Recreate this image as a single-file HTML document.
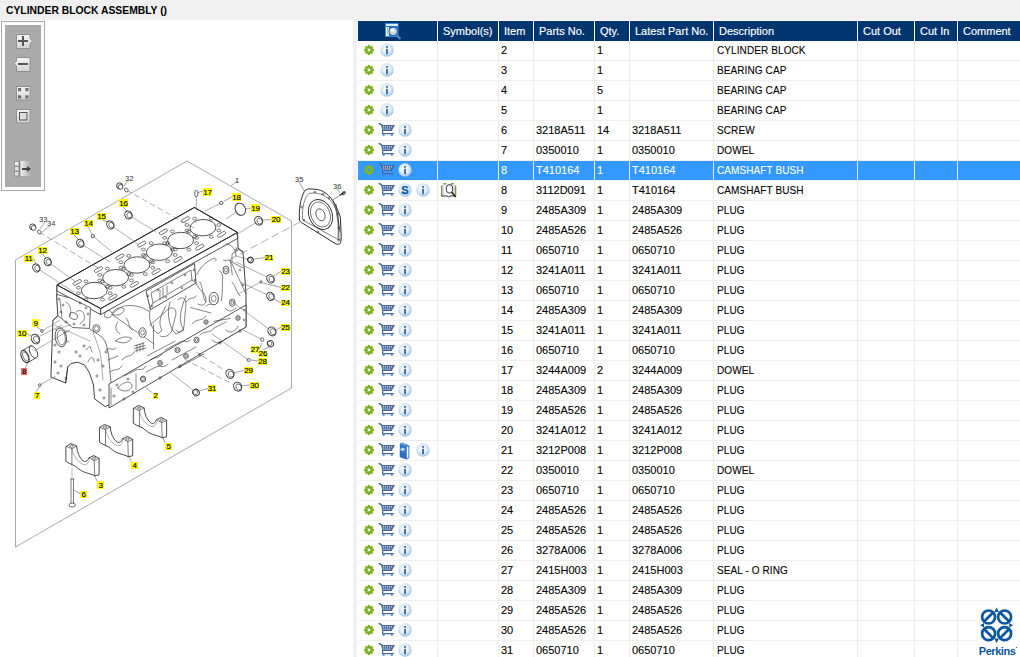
<!DOCTYPE html>
<html><head><meta charset="utf-8"><style>
html,body{margin:0;padding:0;}
body{width:1020px;height:657px;overflow:hidden;position:relative;background:#f0f0f0;font-family:"Liberation Sans",sans-serif;}
#title{position:absolute;left:6px;top:3px;font-weight:bold;font-size:11px;letter-spacing:0px;color:#000;line-height:14px;white-space:nowrap;transform:scaleX(0.94);transform-origin:0 0;}
#left{position:absolute;left:0;top:20px;width:353px;height:637px;background:#fff;}
svg{position:absolute;left:0;top:0;}
.c{position:absolute;font-size:11px;line-height:20px;color:#000;white-space:nowrap;-webkit-text-stroke:0.1px #000;}
.c.s{-webkit-text-stroke:0.1px #fff;}
.n{letter-spacing:0px;}
.d{letter-spacing:0.1px;margin-left:1px;transform:scaleX(0.91);transform-origin:0 0;}
.s{color:#fff;}
.h{position:absolute;top:21px;font-size:11px;line-height:20px;color:#fff;white-space:nowrap;-webkit-text-stroke:0.15px #fff;}
</style></head><body>
<div id="title">CYLINDER BLOCK ASSEMBLY ()</div>
<div id="left"></div>
<svg width="1020" height="657" viewBox="0 0 1020 657">
<defs>
<radialGradient id="ig" cx="0.45" cy="0.42" r="0.58">
<stop offset="0" stop-color="#ffffff"/><stop offset="0.55" stop-color="#e2edf7"/><stop offset="0.85" stop-color="#b5d2ec"/><stop offset="1" stop-color="#9ec3e6"/>
</radialGradient>
<g id="gear"><path fill="#7db425" fill-rule="evenodd" d="M3.43,1.21 L3.86,1.06 L4.04,-0.01 L5.96,-0.01 L6.14,1.06 L6.57,1.21 L6.98,1.41 L7.87,0.78 L9.22,2.13 L8.59,3.02 L8.79,3.43 L8.94,3.86 L10.01,4.04 L10.01,5.96 L8.94,6.14 L8.79,6.57 L8.59,6.98 L9.22,7.87 L7.87,9.22 L6.98,8.59 L6.57,8.79 L6.14,8.94 L5.96,10.01 L4.04,10.01 L3.86,8.94 L3.43,8.79 L3.02,8.59 L2.13,9.22 L0.78,7.87 L1.41,6.98 L1.21,6.57 L1.06,6.14 L-0.01,5.96 L-0.01,4.04 L1.06,3.86 L1.21,3.43 L1.41,3.02 L0.78,2.13 L2.13,0.78 L3.02,1.41Z M5,3.6 A1.4,1.4 0 1,0 5,6.4 A1.4,1.4 0 1,0 5,3.6Z"/></g>
<g id="cart">
<path d="M0.3,0.6 L1.9,1.4 L3.2,2.8" fill="none" stroke="#46689a" stroke-width="1.5" stroke-linecap="round"/>
<path d="M2.3,2 H16 L12.6,8 H3.3 Z" fill="#46689a"/>
<g fill="#e8eef8"><rect x="4" y="3.3" width="1.1" height="1.1"/><rect x="6" y="3.3" width="1.1" height="1.1"/><rect x="8" y="3.3" width="1.1" height="1.1"/><rect x="10" y="3.3" width="1.1" height="1.1"/><rect x="12" y="3.3" width="1.1" height="1.1"/>
<rect x="4.2" y="5.5" width="1.1" height="1.1"/><rect x="6.2" y="5.5" width="1.1" height="1.1"/><rect x="8.2" y="5.5" width="1.1" height="1.1"/><rect x="10.2" y="5.5" width="1.1" height="1.1"/></g>
<path d="M3.6,7.8 V10.6 H14.8" fill="none" stroke="#46689a" stroke-width="1.3"/>
<rect x="3.6" y="11.2" width="2" height="1.6" fill="#3a86e0"/><rect x="11.8" y="11.2" width="2" height="1.6" fill="#3a86e0"/>
</g>
<g id="info">
<circle cx="7" cy="7" r="6.7" fill="url(#ig)"/>
<rect x="6.1" y="3" width="1.8" height="1.8" fill="#3265a5"/>
<rect x="6.1" y="5.8" width="1.8" height="5.4" fill="#3265a5"/>
</g>
<g id="sico">
<circle cx="7" cy="7" r="6.7" fill="url(#ig)"/>
<text x="7" y="10.8" text-anchor="middle" font-family="Liberation Sans" font-weight="bold" font-size="11" fill="#145d9e" stroke="#145d9e" stroke-width="0.4">S</text>
</g>
<g id="book">
<path d="M7,2.2 L10.3,3.8 V16 L7.5,17.6 Z" fill="#2a6db8"/>
<path d="M7.6,4.2 L9.4,5 V15.6 L7.6,16.6 Z" fill="#ffffff"/>
<path d="M0.8,1.4 L3,0.6 L7.6,2.6 V17.6 L0.8,15 Z" fill="#2f7ac8"/>
<path d="M1.5,2.2 L3,1.6 L4.5,2.2 L6,2.8 L7,3.4" stroke="#8fc0ee" stroke-width="0.9" fill="none"/>
<ellipse cx="3.7" cy="7.3" rx="2.2" ry="1.6" fill="#b9d7f3"/>
<path d="M0.8,10 L7.6,12 V17.6 L0.8,15Z" fill="#2268b4" opacity="0.6"/>
</g>
<g id="bookmag">
<path d="M1.2,2.5 C3,1.5 5,1.5 7.5,3 C10,1.5 12,1.5 14,2.5 V13 C12,12 10,12 7.5,13.5 C5,12 3,12 1.2,13 Z" fill="#fbfbfb" stroke="#9a9a9a" stroke-width="0.6"/>
<rect x="0" y="2.5" width="1.3" height="11" fill="#8d8a52"/>
<rect x="14" y="2.5" width="1.3" height="11" fill="#8d8a52"/>
<rect x="2.3" y="0" width="3" height="1.3" fill="#8d8a52"/>
<rect x="9.8" y="0" width="3" height="1.3" fill="#8d8a52"/>
<path d="M1,13.3 C4,12.5 6,13 7.5,14 C9,13 11,12.5 14.3,13.3" fill="none" stroke="#333" stroke-width="0.9"/>
<path d="M2,4 V12 M13,4 V12" stroke="#c8c8c8" stroke-width="1"/>
<ellipse cx="8.5" cy="5.8" rx="3.2" ry="4.2" fill="none" stroke="#333" stroke-width="1"/>
<path d="M10.8,9.3 L14.6,14" stroke="#1e1e1e" stroke-width="1.5"/>
</g>
</defs>

<rect x="357" y="20" width="663" height="637" fill="#fff"/><rect x="358" y="161" width="662" height="19" fill="#3399ff"/><rect x="358" y="60" width="662" height="1" fill="#efefef"/><rect x="358" y="80" width="662" height="1" fill="#efefef"/><rect x="358" y="100" width="662" height="1" fill="#efefef"/><rect x="358" y="120" width="662" height="1" fill="#efefef"/><rect x="358" y="140" width="662" height="1" fill="#efefef"/><rect x="358" y="160" width="662" height="1" fill="#efefef"/><rect x="358" y="180" width="662" height="1" fill="#efefef"/><rect x="358" y="200" width="662" height="1" fill="#efefef"/><rect x="358" y="220" width="662" height="1" fill="#efefef"/><rect x="358" y="240" width="662" height="1" fill="#efefef"/><rect x="358" y="260" width="662" height="1" fill="#efefef"/><rect x="358" y="280" width="662" height="1" fill="#efefef"/><rect x="358" y="300" width="662" height="1" fill="#efefef"/><rect x="358" y="320" width="662" height="1" fill="#efefef"/><rect x="358" y="340" width="662" height="1" fill="#efefef"/><rect x="358" y="360" width="662" height="1" fill="#efefef"/><rect x="358" y="380" width="662" height="1" fill="#efefef"/><rect x="358" y="400" width="662" height="1" fill="#efefef"/><rect x="358" y="420" width="662" height="1" fill="#efefef"/><rect x="358" y="440" width="662" height="1" fill="#efefef"/><rect x="358" y="460" width="662" height="1" fill="#efefef"/><rect x="358" y="480" width="662" height="1" fill="#efefef"/><rect x="358" y="500" width="662" height="1" fill="#efefef"/><rect x="358" y="520" width="662" height="1" fill="#efefef"/><rect x="358" y="540" width="662" height="1" fill="#efefef"/><rect x="358" y="560" width="662" height="1" fill="#efefef"/><rect x="358" y="580" width="662" height="1" fill="#efefef"/><rect x="358" y="600" width="662" height="1" fill="#efefef"/><rect x="358" y="620" width="662" height="1" fill="#efefef"/><rect x="358" y="640" width="662" height="1" fill="#efefef"/><rect x="358" y="660" width="662" height="1" fill="#efefef"/><rect x="437" y="41" width="1" height="616" fill="#ececec"/><rect x="498" y="41" width="1" height="616" fill="#ececec"/><rect x="533" y="41" width="1" height="616" fill="#ececec"/><rect x="594" y="41" width="1" height="616" fill="#ececec"/><rect x="629" y="41" width="1" height="616" fill="#ececec"/><rect x="713" y="41" width="1" height="616" fill="#ececec"/><rect x="857" y="41" width="1" height="616" fill="#ececec"/><rect x="914" y="41" width="1" height="616" fill="#ececec"/><rect x="957" y="41" width="1" height="616" fill="#ececec"/><rect x="358" y="21" width="662" height="20" fill="#00356f"/><rect x="437" y="21" width="1" height="20" fill="#f4f6f9"/><rect x="498" y="21" width="1" height="20" fill="#f4f6f9"/><rect x="533" y="21" width="1" height="20" fill="#f4f6f9"/><rect x="594" y="21" width="1" height="20" fill="#f4f6f9"/><rect x="629" y="21" width="1" height="20" fill="#f4f6f9"/><rect x="713" y="21" width="1" height="20" fill="#f4f6f9"/><rect x="857" y="21" width="1" height="20" fill="#f4f6f9"/><rect x="914" y="21" width="1" height="20" fill="#f4f6f9"/><rect x="957" y="21" width="1" height="20" fill="#f4f6f9"/>
<use href="#gear" x="364" y="45"/><use href="#info" x="380" y="43"/><use href="#gear" x="364" y="65"/><use href="#info" x="380" y="63"/><use href="#gear" x="364" y="85"/><use href="#info" x="380" y="83"/><use href="#gear" x="364" y="105"/><use href="#info" x="380" y="103"/><use href="#gear" x="364" y="125"/><use href="#cart" x="379" y="123"/><use href="#info" x="398" y="123"/><use href="#gear" x="364" y="145"/><use href="#cart" x="379" y="143"/><use href="#info" x="398" y="143"/><use href="#gear" x="364" y="165"/><use href="#cart" x="379" y="163"/><use href="#info" x="398" y="163"/><use href="#gear" x="364" y="185"/><use href="#cart" x="379" y="183"/><use href="#sico" x="398" y="183"/><use href="#info" x="416" y="183"/><use href="#bookmag" x="441" y="183"/><use href="#gear" x="364" y="205"/><use href="#cart" x="379" y="203"/><use href="#info" x="398" y="203"/><use href="#gear" x="364" y="225"/><use href="#cart" x="379" y="223"/><use href="#info" x="398" y="223"/><use href="#gear" x="364" y="245"/><use href="#cart" x="379" y="243"/><use href="#info" x="398" y="243"/><use href="#gear" x="364" y="265"/><use href="#cart" x="379" y="263"/><use href="#info" x="398" y="263"/><use href="#gear" x="364" y="285"/><use href="#cart" x="379" y="283"/><use href="#info" x="398" y="283"/><use href="#gear" x="364" y="305"/><use href="#cart" x="379" y="303"/><use href="#info" x="398" y="303"/><use href="#gear" x="364" y="325"/><use href="#cart" x="379" y="323"/><use href="#info" x="398" y="323"/><use href="#gear" x="364" y="345"/><use href="#cart" x="379" y="343"/><use href="#info" x="398" y="343"/><use href="#gear" x="364" y="365"/><use href="#cart" x="379" y="363"/><use href="#info" x="398" y="363"/><use href="#gear" x="364" y="385"/><use href="#cart" x="379" y="383"/><use href="#info" x="398" y="383"/><use href="#gear" x="364" y="405"/><use href="#cart" x="379" y="403"/><use href="#info" x="398" y="403"/><use href="#gear" x="364" y="425"/><use href="#cart" x="379" y="423"/><use href="#info" x="398" y="423"/><use href="#gear" x="364" y="445"/><use href="#cart" x="379" y="443"/><use href="#book" x="399" y="442"/><use href="#info" x="416" y="443"/><use href="#gear" x="364" y="465"/><use href="#cart" x="379" y="463"/><use href="#info" x="398" y="463"/><use href="#gear" x="364" y="485"/><use href="#cart" x="379" y="483"/><use href="#info" x="398" y="483"/><use href="#gear" x="364" y="505"/><use href="#cart" x="379" y="503"/><use href="#info" x="398" y="503"/><use href="#gear" x="364" y="525"/><use href="#cart" x="379" y="523"/><use href="#info" x="398" y="523"/><use href="#gear" x="364" y="545"/><use href="#cart" x="379" y="543"/><use href="#info" x="398" y="543"/><use href="#gear" x="364" y="565"/><use href="#cart" x="379" y="563"/><use href="#info" x="398" y="563"/><use href="#gear" x="364" y="585"/><use href="#cart" x="379" y="583"/><use href="#info" x="398" y="583"/><use href="#gear" x="364" y="605"/><use href="#cart" x="379" y="603"/><use href="#info" x="398" y="603"/><use href="#gear" x="364" y="625"/><use href="#cart" x="379" y="623"/><use href="#info" x="398" y="623"/><use href="#gear" x="364" y="645"/><use href="#cart" x="379" y="643"/><use href="#info" x="398" y="643"/>
<g id="diagram"><path d="M187.0,161.0 L291.5,221.0 L291.5,388.0 L15.5,547.0 L15.5,260.0Z" fill="none" stroke="#a0a0a0" stroke-width="0.9" stroke-linejoin="round" />
<path d="M57.0,285.0 L194.4,207.5 L237.5,232.5 L238.0,248.0 L243.0,252.0 L246.0,294.0 L246.0,327.0 L105.3,406.7 L94.5,398.8 L93.5,385.0 L89.5,373.0 L84.6,365.0 L77.6,362.2 L71.0,363.5 L67.7,367.0 L65.7,383.0 L50.9,377.0 L52.9,320.6 L57.8,315.6 L56.8,294.9Z" fill="#fff" stroke="#2a2a2a" stroke-width="0.9" stroke-linejoin="round" />
<path d="M57.0,285.0 L194.4,207.5 L237.5,232.5 L100.7,308.6Z" fill="#fff" stroke="#2a2a2a" stroke-width="0.9" stroke-linejoin="round" />
<path d="M57.0,285.0 L100.7,308.6 L100.7,314.6 L57.0,291.0Z" fill="#fff" stroke="#2a2a2a" stroke-width="0.8" stroke-linejoin="round" />
<path d="M100.7,308.6 L237.5,232.5 L237.5,238.5 L100.7,314.6Z" fill="#fff" stroke="#2a2a2a" stroke-width="0.8" stroke-linejoin="round" />
<ellipse cx="94.3" cy="290.5" rx="13.0" ry="8.2" fill="#fff" stroke="#2a2a2a" stroke-width="0.8" transform="rotate(-2 94.3 290.5)"/>
<ellipse cx="115.6" cy="277.7" rx="13.0" ry="8.2" fill="#fff" stroke="#2a2a2a" stroke-width="0.8" transform="rotate(-2 115.6 277.7)"/>
<ellipse cx="136.9" cy="265.0" rx="13.0" ry="8.2" fill="#fff" stroke="#2a2a2a" stroke-width="0.8" transform="rotate(-2 136.9 265.0)"/>
<ellipse cx="159.3" cy="252.2" rx="13.0" ry="8.2" fill="#fff" stroke="#2a2a2a" stroke-width="0.8" transform="rotate(-2 159.3 252.2)"/>
<ellipse cx="180.6" cy="240.5" rx="13.0" ry="8.2" fill="#fff" stroke="#2a2a2a" stroke-width="0.8" transform="rotate(-2 180.6 240.5)"/>
<ellipse cx="202.9" cy="227.7" rx="13.0" ry="8.2" fill="#fff" stroke="#2a2a2a" stroke-width="0.8" transform="rotate(-2 202.9 227.7)"/>
<ellipse cx="110.2" cy="293.2" rx="2.0" ry="1.4" fill="none" stroke="#2a2a2a" stroke-width="0.6"/>
<ellipse cx="102.5" cy="299.6" rx="2.0" ry="1.4" fill="none" stroke="#2a2a2a" stroke-width="0.6"/>
<ellipse cx="86.0" cy="299.6" rx="2.0" ry="1.4" fill="none" stroke="#2a2a2a" stroke-width="0.6"/>
<ellipse cx="78.4" cy="293.2" rx="2.0" ry="1.4" fill="none" stroke="#2a2a2a" stroke-width="0.6"/>
<ellipse cx="78.4" cy="287.8" rx="2.0" ry="1.4" fill="none" stroke="#2a2a2a" stroke-width="0.6"/>
<ellipse cx="86.0" cy="281.4" rx="2.0" ry="1.4" fill="none" stroke="#2a2a2a" stroke-width="0.6"/>
<ellipse cx="102.5" cy="281.4" rx="2.0" ry="1.4" fill="none" stroke="#2a2a2a" stroke-width="0.6"/>
<ellipse cx="110.2" cy="287.8" rx="2.0" ry="1.4" fill="none" stroke="#2a2a2a" stroke-width="0.6"/>
<ellipse cx="131.5" cy="280.4" rx="2.0" ry="1.4" fill="none" stroke="#2a2a2a" stroke-width="0.6"/>
<ellipse cx="123.8" cy="286.8" rx="2.0" ry="1.4" fill="none" stroke="#2a2a2a" stroke-width="0.6"/>
<ellipse cx="107.3" cy="286.8" rx="2.0" ry="1.4" fill="none" stroke="#2a2a2a" stroke-width="0.6"/>
<ellipse cx="99.7" cy="280.4" rx="2.0" ry="1.4" fill="none" stroke="#2a2a2a" stroke-width="0.6"/>
<ellipse cx="99.7" cy="275.0" rx="2.0" ry="1.4" fill="none" stroke="#2a2a2a" stroke-width="0.6"/>
<ellipse cx="107.3" cy="268.6" rx="2.0" ry="1.4" fill="none" stroke="#2a2a2a" stroke-width="0.6"/>
<ellipse cx="123.8" cy="268.6" rx="2.0" ry="1.4" fill="none" stroke="#2a2a2a" stroke-width="0.6"/>
<ellipse cx="131.5" cy="275.0" rx="2.0" ry="1.4" fill="none" stroke="#2a2a2a" stroke-width="0.6"/>
<ellipse cx="152.8" cy="267.7" rx="2.0" ry="1.4" fill="none" stroke="#2a2a2a" stroke-width="0.6"/>
<ellipse cx="145.2" cy="274.1" rx="2.0" ry="1.4" fill="none" stroke="#2a2a2a" stroke-width="0.6"/>
<ellipse cx="128.7" cy="274.1" rx="2.0" ry="1.4" fill="none" stroke="#2a2a2a" stroke-width="0.6"/>
<ellipse cx="121.0" cy="267.7" rx="2.0" ry="1.4" fill="none" stroke="#2a2a2a" stroke-width="0.6"/>
<ellipse cx="121.0" cy="262.3" rx="2.0" ry="1.4" fill="none" stroke="#2a2a2a" stroke-width="0.6"/>
<ellipse cx="128.7" cy="255.9" rx="2.0" ry="1.4" fill="none" stroke="#2a2a2a" stroke-width="0.6"/>
<ellipse cx="145.2" cy="255.9" rx="2.0" ry="1.4" fill="none" stroke="#2a2a2a" stroke-width="0.6"/>
<ellipse cx="152.8" cy="262.3" rx="2.0" ry="1.4" fill="none" stroke="#2a2a2a" stroke-width="0.6"/>
<ellipse cx="175.2" cy="254.9" rx="2.0" ry="1.4" fill="none" stroke="#2a2a2a" stroke-width="0.6"/>
<ellipse cx="167.6" cy="261.3" rx="2.0" ry="1.4" fill="none" stroke="#2a2a2a" stroke-width="0.6"/>
<ellipse cx="151.1" cy="261.3" rx="2.0" ry="1.4" fill="none" stroke="#2a2a2a" stroke-width="0.6"/>
<ellipse cx="143.4" cy="254.9" rx="2.0" ry="1.4" fill="none" stroke="#2a2a2a" stroke-width="0.6"/>
<ellipse cx="143.4" cy="249.5" rx="2.0" ry="1.4" fill="none" stroke="#2a2a2a" stroke-width="0.6"/>
<ellipse cx="151.1" cy="243.1" rx="2.0" ry="1.4" fill="none" stroke="#2a2a2a" stroke-width="0.6"/>
<ellipse cx="167.6" cy="243.1" rx="2.0" ry="1.4" fill="none" stroke="#2a2a2a" stroke-width="0.6"/>
<ellipse cx="175.2" cy="249.5" rx="2.0" ry="1.4" fill="none" stroke="#2a2a2a" stroke-width="0.6"/>
<ellipse cx="196.5" cy="243.2" rx="2.0" ry="1.4" fill="none" stroke="#2a2a2a" stroke-width="0.6"/>
<ellipse cx="188.8" cy="249.6" rx="2.0" ry="1.4" fill="none" stroke="#2a2a2a" stroke-width="0.6"/>
<ellipse cx="172.3" cy="249.6" rx="2.0" ry="1.4" fill="none" stroke="#2a2a2a" stroke-width="0.6"/>
<ellipse cx="164.7" cy="243.2" rx="2.0" ry="1.4" fill="none" stroke="#2a2a2a" stroke-width="0.6"/>
<ellipse cx="164.7" cy="237.8" rx="2.0" ry="1.4" fill="none" stroke="#2a2a2a" stroke-width="0.6"/>
<ellipse cx="172.3" cy="231.4" rx="2.0" ry="1.4" fill="none" stroke="#2a2a2a" stroke-width="0.6"/>
<ellipse cx="188.8" cy="231.4" rx="2.0" ry="1.4" fill="none" stroke="#2a2a2a" stroke-width="0.6"/>
<ellipse cx="196.5" cy="237.8" rx="2.0" ry="1.4" fill="none" stroke="#2a2a2a" stroke-width="0.6"/>
<ellipse cx="218.8" cy="230.4" rx="2.0" ry="1.4" fill="none" stroke="#2a2a2a" stroke-width="0.6"/>
<ellipse cx="211.2" cy="236.8" rx="2.0" ry="1.4" fill="none" stroke="#2a2a2a" stroke-width="0.6"/>
<ellipse cx="194.7" cy="236.8" rx="2.0" ry="1.4" fill="none" stroke="#2a2a2a" stroke-width="0.6"/>
<ellipse cx="187.0" cy="230.4" rx="2.0" ry="1.4" fill="none" stroke="#2a2a2a" stroke-width="0.6"/>
<ellipse cx="187.0" cy="225.0" rx="2.0" ry="1.4" fill="none" stroke="#2a2a2a" stroke-width="0.6"/>
<ellipse cx="194.7" cy="218.6" rx="2.0" ry="1.4" fill="none" stroke="#2a2a2a" stroke-width="0.6"/>
<ellipse cx="211.2" cy="218.6" rx="2.0" ry="1.4" fill="none" stroke="#2a2a2a" stroke-width="0.6"/>
<ellipse cx="218.8" cy="225.0" rx="2.0" ry="1.4" fill="none" stroke="#2a2a2a" stroke-width="0.6"/>
<rect x="72.7" y="280.9" width="9" height="3" rx="1.5" fill="none" stroke="#2a2a2a" stroke-width="0.6" transform="rotate(-29 77.2 282.4)"/>
<rect x="94.0" y="268.1" width="9" height="3" rx="1.5" fill="none" stroke="#2a2a2a" stroke-width="0.6" transform="rotate(-29 98.5 269.6)"/>
<rect x="108.4" y="295.6" width="9" height="3" rx="1.5" fill="none" stroke="#2a2a2a" stroke-width="0.6" transform="rotate(-29 112.9 297.1)"/>
<rect x="115.3" y="255.4" width="9" height="3" rx="1.5" fill="none" stroke="#2a2a2a" stroke-width="0.6" transform="rotate(-29 119.8 256.9)"/>
<rect x="129.8" y="282.9" width="9" height="3" rx="1.5" fill="none" stroke="#2a2a2a" stroke-width="0.6" transform="rotate(-29 134.2 284.4)"/>
<rect x="137.2" y="242.6" width="9" height="3" rx="1.5" fill="none" stroke="#2a2a2a" stroke-width="0.6" transform="rotate(-29 141.7 244.1)"/>
<rect x="151.6" y="270.1" width="9" height="3" rx="1.5" fill="none" stroke="#2a2a2a" stroke-width="0.6" transform="rotate(-29 156.1 271.6)"/>
<rect x="159.0" y="230.3" width="9" height="3" rx="1.5" fill="none" stroke="#2a2a2a" stroke-width="0.6" transform="rotate(-29 163.5 231.8)"/>
<rect x="173.4" y="257.9" width="9" height="3" rx="1.5" fill="none" stroke="#2a2a2a" stroke-width="0.6" transform="rotate(-29 177.9 259.4)"/>
<rect x="180.8" y="218.1" width="9" height="3" rx="1.5" fill="none" stroke="#2a2a2a" stroke-width="0.6" transform="rotate(-29 185.3 219.6)"/>
<rect x="195.2" y="245.6" width="9" height="3" rx="1.5" fill="none" stroke="#2a2a2a" stroke-width="0.6" transform="rotate(-29 199.8 247.1)"/>
<rect x="217.1" y="232.8" width="9" height="3" rx="1.5" fill="none" stroke="#2a2a2a" stroke-width="0.6" transform="rotate(-29 221.6 234.3)"/>
<path d="M57.0,285.0 L194.4,207.5 L237.5,232.5 L100.7,308.6Z" fill="none" stroke="#2a2a2a" stroke-width="0.85" stroke-linejoin="round" />
<path d="M56.8,294.9 L57.8,315.6 L72.7,327.5 L89.5,328.5 L90.5,307.7 L69.7,297.8 Z" fill="#fff" stroke="#2a2a2a" stroke-width="0.7" stroke-linejoin="round" stroke-linecap="round" />
<path d="M60,300 L62,318 M66,302 C70,304 72,310 70,316 M76,312 C80,308 86,312 84,320 L80,324" fill="none" stroke="#2a2a2a" stroke-width="0.55" stroke-linejoin="round" stroke-linecap="round" />
<ellipse cx="73.5" cy="316.0" rx="4.2" ry="3.2" fill="none" stroke="#2a2a2a" stroke-width="0.6" transform="rotate(20 73.5 316.0)"/>
<ellipse cx="59.0" cy="299.0" rx="1.0" ry="1.0" fill="none" stroke="#2a2a2a" stroke-width="0.55"/>
<ellipse cx="63.0" cy="305.0" rx="1.0" ry="1.0" fill="none" stroke="#2a2a2a" stroke-width="0.55"/>
<ellipse cx="61.0" cy="312.0" rx="1.0" ry="1.0" fill="none" stroke="#2a2a2a" stroke-width="0.55"/>
<ellipse cx="66.0" cy="322.0" rx="1.0" ry="1.0" fill="none" stroke="#2a2a2a" stroke-width="0.55"/>
<ellipse cx="74.0" cy="324.0" rx="1.0" ry="1.0" fill="none" stroke="#2a2a2a" stroke-width="0.55"/>
<ellipse cx="84.0" cy="325.0" rx="1.0" ry="1.0" fill="none" stroke="#2a2a2a" stroke-width="0.55"/>
<ellipse cx="88.0" cy="314.0" rx="1.0" ry="1.0" fill="none" stroke="#2a2a2a" stroke-width="0.55"/>
<ellipse cx="86.0" cy="308.0" rx="1.0" ry="1.0" fill="none" stroke="#2a2a2a" stroke-width="0.55"/>
<ellipse cx="80.0" cy="303.0" rx="1.0" ry="1.0" fill="none" stroke="#2a2a2a" stroke-width="0.55"/>
<path d="M52.9,320.6 L57.8,315.6 M65.7,383 L67.7,367" fill="none" stroke="#2a2a2a" stroke-width="0.6" stroke-linejoin="round" stroke-linecap="round" />
<ellipse cx="60.8" cy="337.4" rx="5.6" ry="9.5" fill="none" stroke="#2a2a2a" stroke-width="0.75" transform="rotate(-8 60.8 337.4)"/>
<ellipse cx="61.3" cy="337.4" rx="4.0" ry="7.5" fill="none" stroke="#2a2a2a" stroke-width="0.55" transform="rotate(-8 61.3 337.4)"/>
<path d="M64,333 L68,331 M66,342 L69,341" fill="none" stroke="#2a2a2a" stroke-width="0.55" stroke-linejoin="round" stroke-linecap="round" />
<ellipse cx="55.0" cy="345.0" rx="1.1" ry="1.1" fill="none" stroke="#2a2a2a" stroke-width="0.55"/>
<ellipse cx="59.0" cy="352.0" rx="1.1" ry="1.1" fill="none" stroke="#2a2a2a" stroke-width="0.55"/>
<ellipse cx="55.0" cy="362.0" rx="1.1" ry="1.1" fill="none" stroke="#2a2a2a" stroke-width="0.55"/>
<ellipse cx="61.0" cy="366.0" rx="1.1" ry="1.1" fill="none" stroke="#2a2a2a" stroke-width="0.55"/>
<ellipse cx="66.0" cy="378.0" rx="1.1" ry="1.1" fill="none" stroke="#2a2a2a" stroke-width="0.55"/>
<ellipse cx="58.0" cy="373.0" rx="1.1" ry="1.1" fill="none" stroke="#2a2a2a" stroke-width="0.55"/>
<ellipse cx="76.0" cy="352.0" rx="1.1" ry="1.1" fill="none" stroke="#2a2a2a" stroke-width="0.55"/>
<ellipse cx="84.0" cy="346.0" rx="1.1" ry="1.1" fill="none" stroke="#2a2a2a" stroke-width="0.55"/>
<ellipse cx="80.0" cy="356.0" rx="1.1" ry="1.1" fill="none" stroke="#2a2a2a" stroke-width="0.55"/>
<path d="M54,325 L90,341 M54,330 L70,325" fill="none" stroke="#666" stroke-width="0.5" stroke-linejoin="round" stroke-linecap="round" />
<path d="M90.5,329.5 C96,333 102,336 105.3,341.4 C108,350 109,356 109.3,363.2 C110,372 110.5,378 111.3,385" fill="none" stroke="#2a2a2a" stroke-width="0.65" stroke-linejoin="round" stroke-linecap="round" />
<path d="M93,332 C96,340 98,346 100,352 C102,362 102,372 103,380" fill="none" stroke="#555" stroke-width="0.5" stroke-linejoin="round" stroke-linecap="round" />
<ellipse cx="96.4" cy="328.5" rx="3.6" ry="3.8" fill="#fff" stroke="#2a2a2a" stroke-width="0.7"/>
<ellipse cx="96.4" cy="328.5" rx="2.0" ry="2.2" fill="none" stroke="#2a2a2a" stroke-width="0.5"/>
<ellipse cx="98.0" cy="360.0" rx="1.1" ry="1.1" fill="none" stroke="#2a2a2a" stroke-width="0.55"/>
<ellipse cx="103.0" cy="366.0" rx="1.1" ry="1.1" fill="none" stroke="#2a2a2a" stroke-width="0.55"/>
<ellipse cx="100.0" cy="390.0" rx="1.1" ry="1.1" fill="none" stroke="#2a2a2a" stroke-width="0.55"/>
<ellipse cx="104.0" cy="398.0" rx="1.1" ry="1.1" fill="none" stroke="#2a2a2a" stroke-width="0.55"/>
<ellipse cx="97.0" cy="376.0" rx="1.1" ry="1.1" fill="none" stroke="#2a2a2a" stroke-width="0.55"/>
<ellipse cx="106.0" cy="352.0" rx="1.1" ry="1.1" fill="none" stroke="#2a2a2a" stroke-width="0.55"/>
<path d="M88,362 C90,356 94,356 94,362 M86,350 L90,346 L92,352" fill="none" stroke="#2a2a2a" stroke-width="0.55" stroke-linejoin="round" stroke-linecap="round" />
<path d="M109.0,384.0 L246.0,305.0 L246.0,327.0 L109.0,408.0Z" fill="#fff" stroke="#2a2a2a" stroke-width="0.8" stroke-linejoin="round" />
<path d="M111,388 L111,405 M136,374 L136,390" fill="none" stroke="#2a2a2a" stroke-width="0.55" stroke-linejoin="round" stroke-linecap="round" />
<path d="M118,388 C122,382 130,380 132,385 C133,390 124,394 118,388Z" fill="none" stroke="#2a2a2a" stroke-width="0.6" stroke-linejoin="round" stroke-linecap="round" />
<ellipse cx="114.0" cy="396.0" rx="1.1" ry="1.1" fill="none" stroke="#2a2a2a" stroke-width="0.55"/>
<ellipse cx="117.0" cy="385.0" rx="1.1" ry="1.1" fill="none" stroke="#2a2a2a" stroke-width="0.55"/>
<ellipse cx="128.0" cy="379.0" rx="1.1" ry="1.1" fill="none" stroke="#2a2a2a" stroke-width="0.55"/>
<ellipse cx="133.0" cy="392.0" rx="1.1" ry="1.1" fill="none" stroke="#2a2a2a" stroke-width="0.55"/>
<ellipse cx="124.0" cy="399.0" rx="1.1" ry="1.1" fill="none" stroke="#2a2a2a" stroke-width="0.55"/>
<ellipse cx="143.0" cy="379.0" rx="2.6" ry="3.0" fill="none" stroke="#2a2a2a" stroke-width="0.8"/>
<ellipse cx="143.0" cy="379.0" rx="1.4" ry="1.6" fill="none" stroke="#2a2a2a" stroke-width="0.5"/>
<ellipse cx="160.0" cy="378.0" rx="1.3" ry="1.2" fill="none" stroke="#2a2a2a" stroke-width="0.55"/>
<ellipse cx="180.0" cy="366.2" rx="1.3" ry="1.2" fill="none" stroke="#2a2a2a" stroke-width="0.55"/>
<ellipse cx="200.0" cy="354.5" rx="1.3" ry="1.2" fill="none" stroke="#2a2a2a" stroke-width="0.55"/>
<ellipse cx="220.0" cy="342.8" rx="1.3" ry="1.2" fill="none" stroke="#2a2a2a" stroke-width="0.55"/>
<ellipse cx="240.0" cy="331.0" rx="1.3" ry="1.2" fill="none" stroke="#2a2a2a" stroke-width="0.55"/>
<path d="M146.0,291.0 L194.5,263.5 L196.0,283.0 L150.5,309.7Z" fill="none" stroke="#2a2a2a" stroke-width="0.8" stroke-linejoin="round" />
<path d="M151.0,293.0 L191.0,270.0 L192.0,280.0 L153.0,303.0Z" fill="none" stroke="#2a2a2a" stroke-width="0.6" stroke-linejoin="round" />
<path d="M160,290 L160,300 M163,288 L163,298 M167,286 L167,293 M153,303 L150,308 M192,280 L195,282" fill="none" stroke="#2a2a2a" stroke-width="0.6" stroke-linejoin="round" stroke-linecap="round" />
<ellipse cx="148.0" cy="296.0" rx="0.9" ry="0.9" fill="none" stroke="#2a2a2a" stroke-width="0.55"/>
<ellipse cx="158.0" cy="290.0" rx="0.9" ry="0.9" fill="none" stroke="#2a2a2a" stroke-width="0.55"/>
<ellipse cx="172.0" cy="283.0" rx="0.9" ry="0.9" fill="none" stroke="#2a2a2a" stroke-width="0.55"/>
<ellipse cx="185.0" cy="275.0" rx="0.9" ry="0.9" fill="none" stroke="#2a2a2a" stroke-width="0.55"/>
<ellipse cx="194.0" cy="270.0" rx="0.9" ry="0.9" fill="none" stroke="#2a2a2a" stroke-width="0.55"/>
<ellipse cx="195.0" cy="280.0" rx="0.9" ry="0.9" fill="none" stroke="#2a2a2a" stroke-width="0.55"/>
<ellipse cx="182.0" cy="288.0" rx="0.9" ry="0.9" fill="none" stroke="#2a2a2a" stroke-width="0.55"/>
<ellipse cx="166.0" cy="297.0" rx="0.9" ry="0.9" fill="none" stroke="#2a2a2a" stroke-width="0.55"/>
<ellipse cx="152.0" cy="306.0" rx="0.9" ry="0.9" fill="none" stroke="#2a2a2a" stroke-width="0.55"/>
<path d="M150,310 C148,320 152,330 158,334 L162,330 C158,324 160,316 166,306" fill="none" stroke="#2a2a2a" stroke-width="0.6" stroke-linejoin="round" stroke-linecap="round" />
<path d="M170,302 C166,314 170,330 176,334 L184,330 C178,322 180,310 186,296" fill="none" stroke="#2a2a2a" stroke-width="0.6" stroke-linejoin="round" stroke-linecap="round" />
<path d="M196,283 C198,290 206,292 206,300 C206,306 200,306 198,304" fill="none" stroke="#2a2a2a" stroke-width="0.6" stroke-linejoin="round" stroke-linecap="round" />
<path d="M113.3,313.1 C118,309 122,306 125.5,305.8 C132,305 138,306 143.7,308.3 L148.6,311.3" fill="none" stroke="#333" stroke-width="0.6" stroke-linejoin="round" stroke-linecap="round" />
<path d="M104.7,314 C106,310 110,309 112,313 C113,317 108,319 105,317Z" fill="none" stroke="#333" stroke-width="0.6" stroke-linejoin="round" stroke-linecap="round" />
<path d="M113,312 C116,308 122,306 124,309 C125,312 120,316 114,315Z" fill="none" stroke="#333" stroke-width="0.6" stroke-linejoin="round" stroke-linecap="round" />
<path d="M115.7,341 C120,337 126,336 131.5,338 C130,342 124,345 115.7,341Z" fill="none" stroke="#333" stroke-width="0.6" stroke-linejoin="round" stroke-linecap="round" />
<path d="M134,346 L144,343 M134.5,348.5 L145,345.5 M135,351 L146,348 M137,345 L137,352 M140,344 L140,351 M143,343 L143,350" fill="none" stroke="#333" stroke-width="0.6" stroke-linejoin="round" stroke-linecap="round" />
<path d="M112,314.4 L153.5,343.6 M153.5,325 L153.5,348.5 M147.4,355.8 L175,341.2" fill="none" stroke="#333" stroke-width="0.6" stroke-linejoin="round" stroke-linecap="round" />
<path d="M149.8,325.3 L168,309.5 C172,306 176,308 176,314 L172,330 C170,336 164,338 160,336" fill="none" stroke="#333" stroke-width="0.6" stroke-linejoin="round" stroke-linecap="round" />
<path d="M178,300 C182,296 186,298 186,304 L184,326 C183,332 178,334 176,330" fill="none" stroke="#333" stroke-width="0.6" stroke-linejoin="round" stroke-linecap="round" />
<path d="M118,322 C114,326 116,332 120,334 M126,318 C130,322 128,328 132,330" fill="none" stroke="#333" stroke-width="0.6" stroke-linejoin="round" stroke-linecap="round" />
<path d="M106,350 C110,346 112,352 116,348 M108,360 L118,356 M110,372 C114,368 118,372 122,366" fill="none" stroke="#333" stroke-width="0.6" stroke-linejoin="round" stroke-linecap="round" />
<path d="M122,360 C126,354 132,358 134,352 M124,376 L136,370 C140,368 142,372 146,366" fill="none" stroke="#333" stroke-width="0.6" stroke-linejoin="round" stroke-linecap="round" />
<path d="M150,360 C154,356 158,360 162,354 M146,372 L156,367 C160,365 164,369 168,364" fill="none" stroke="#333" stroke-width="0.6" stroke-linejoin="round" stroke-linecap="round" />
<path d="M165,350 L180,342 C184,340 188,344 190,340 M172,360 L196,347 M178,368 L204,354" fill="none" stroke="#333" stroke-width="0.6" stroke-linejoin="round" stroke-linecap="round" />
<path d="M192,324 C196,318 202,322 206,316 M200,335 C204,330 210,334 214,328 L226,322" fill="none" stroke="#333" stroke-width="0.6" stroke-linejoin="round" stroke-linecap="round" />
<path d="M212,340 C216,344 222,344 226,338 M226,330 C230,334 236,332 238,326" fill="none" stroke="#333" stroke-width="0.6" stroke-linejoin="round" stroke-linecap="round" />
<path d="M196.7,274.7 C200,268 204,263 213.8,258.2 C216,258 216.5,260 215.9,261" fill="none" stroke="#333" stroke-width="0.6" stroke-linejoin="round" stroke-linecap="round" />
<path d="M219.3,270.5 C222,272 223,276 222.7,277.4 C222,284 223,292 221.4,300.7" fill="none" stroke="#333" stroke-width="0.6" stroke-linejoin="round" stroke-linecap="round" />
<path d="M223.4,260.3 L230.3,260.3 L232.3,274.7 M230.3,260.3 L246,294" fill="none" stroke="#333" stroke-width="0.6" stroke-linejoin="round" stroke-linecap="round" />
<path d="M190.5,307.5 L211,313 M213.8,321.2 L230.3,318.5 M186,302 C190,296 194,300 196,296" fill="none" stroke="#333" stroke-width="0.6" stroke-linejoin="round" stroke-linecap="round" />
<path d="M232,282 C236,286 236,292 240,296 M225,308 C228,312 232,312 236,308" fill="none" stroke="#333" stroke-width="0.6" stroke-linejoin="round" stroke-linecap="round" />
<path d="M200,282 C204,290 202,298 206,302 M206,306 C210,302 216,306 218,302" fill="none" stroke="#333" stroke-width="0.6" stroke-linejoin="round" stroke-linecap="round" />
<ellipse cx="213.8" cy="298.6" rx="4.6" ry="6.2" fill="#fff" stroke="#2a2a2a" stroke-width="0.75"/>
<ellipse cx="213.8" cy="298.6" rx="2.3" ry="3.1" fill="none" stroke="#2a2a2a" stroke-width="0.55"/>
<ellipse cx="232.3" cy="302.7" rx="2.8" ry="3.6" fill="#fff" stroke="#2a2a2a" stroke-width="0.75"/>
<ellipse cx="232.3" cy="302.7" rx="1.4" ry="1.8" fill="none" stroke="#2a2a2a" stroke-width="0.55"/>
<ellipse cx="142.5" cy="332.6" rx="3.6" ry="4.8" fill="#fff" stroke="#2a2a2a" stroke-width="0.75"/>
<ellipse cx="142.5" cy="332.6" rx="1.8" ry="2.4" fill="none" stroke="#2a2a2a" stroke-width="0.55"/>
<ellipse cx="196.5" cy="340.0" rx="2.6" ry="2.8" fill="#fff" stroke="#2a2a2a" stroke-width="0.75"/>
<ellipse cx="196.5" cy="340.0" rx="1.3" ry="1.4" fill="none" stroke="#2a2a2a" stroke-width="0.55"/>
<ellipse cx="177.5" cy="350.0" rx="2.6" ry="2.6" fill="#fff" stroke="#2a2a2a" stroke-width="0.75"/>
<ellipse cx="177.5" cy="350.0" rx="1.3" ry="1.3" fill="none" stroke="#2a2a2a" stroke-width="0.55"/>
<ellipse cx="160.0" cy="363.0" rx="2.4" ry="2.4" fill="#fff" stroke="#2a2a2a" stroke-width="0.75"/>
<ellipse cx="160.0" cy="363.0" rx="1.2" ry="1.2" fill="none" stroke="#2a2a2a" stroke-width="0.55"/>
<ellipse cx="226.0" cy="270.0" rx="3.0" ry="4.0" fill="#fff" stroke="#2a2a2a" stroke-width="0.75"/>
<ellipse cx="226.0" cy="270.0" rx="1.5" ry="2.0" fill="none" stroke="#2a2a2a" stroke-width="0.55"/>
<ellipse cx="206.0" cy="322.0" rx="2.2" ry="2.2" fill="#fff" stroke="#2a2a2a" stroke-width="0.75"/>
<ellipse cx="206.0" cy="322.0" rx="1.1" ry="1.1" fill="none" stroke="#2a2a2a" stroke-width="0.55"/>
<ellipse cx="238.0" cy="318.0" rx="2.2" ry="2.4" fill="#fff" stroke="#2a2a2a" stroke-width="0.75"/>
<ellipse cx="238.0" cy="318.0" rx="1.1" ry="1.2" fill="none" stroke="#2a2a2a" stroke-width="0.55"/>
<ellipse cx="186.0" cy="356.0" rx="2.4" ry="2.4" fill="#fff" stroke="#2a2a2a" stroke-width="0.75"/>
<ellipse cx="186.0" cy="356.0" rx="1.2" ry="1.2" fill="none" stroke="#2a2a2a" stroke-width="0.55"/>
<path d="M238,250 L232,254 L232,262 L243,268 M243,252 L236,248" fill="none" stroke="#2a2a2a" stroke-width="0.6" stroke-linejoin="round" stroke-linecap="round" />
<path d="M226,244 C232,244 236,250 236,256" fill="none" stroke="#2a2a2a" stroke-width="0.6" stroke-linejoin="round" stroke-linecap="round" />
<ellipse cx="236.0" cy="250.0" rx="0.9" ry="0.9" fill="none" stroke="#2a2a2a" stroke-width="0.5"/>
<ellipse cx="240.0" cy="270.0" rx="0.9" ry="0.9" fill="none" stroke="#2a2a2a" stroke-width="0.5"/>
<ellipse cx="243.0" cy="285.0" rx="0.9" ry="0.9" fill="none" stroke="#2a2a2a" stroke-width="0.5"/>
<ellipse cx="244.0" cy="310.0" rx="0.9" ry="0.9" fill="none" stroke="#2a2a2a" stroke-width="0.5"/>
<ellipse cx="244.0" cy="320.0" rx="0.9" ry="0.9" fill="none" stroke="#2a2a2a" stroke-width="0.5"/>
<path d="M66.2,446.4 L70.9,443.5 L76.6,446.0 C77.2,452.5 79.2,457.5 83.2,461.0 C85.2,462.0 87.2,462.0 89.0,457.8 L93.8,455.5 L99.1,458.5 L99.1,474.9 L94.7,475.8 C88.2,472.5 84.2,473.5 78.2,468.5 C74.2,464.5 70.2,464.5 66.2,461.6 Z" fill="#fff" stroke="#2a2a2a" stroke-width="0.85" stroke-linejoin="round" stroke-linecap="round" />
<path d="M66.2,446.4 L71.9,448.8 L76.6,446.0 M71.9,448.8 L71.9,465.0 M89.0,457.8 L94.2,460.8 L99.1,458.5 M94.2,460.8 L94.7,475.8" fill="none" stroke="#2a2a2a" stroke-width="0.6" stroke-linejoin="round" stroke-linecap="round" />
<path d="M71.9,448.8 C73.2,455.5 77.2,461.5 82.2,464.0 C85.2,465.5 88.2,464.5 89.0,460.5" fill="none" stroke="#666" stroke-width="0.5" stroke-linejoin="round" stroke-linecap="round" />
<ellipse cx="71.4" cy="446.2" rx="1.7" ry="1.1" fill="none" stroke="#2a2a2a" stroke-width="0.6"/>
<ellipse cx="94.0" cy="458.2" rx="1.7" ry="1.1" fill="none" stroke="#2a2a2a" stroke-width="0.6"/>
<path d="M99.8,427.3 L104.5,424.4 L110.2,426.9 C110.8,433.4 112.8,438.4 116.8,441.9 C118.8,442.9 120.8,442.9 122.6,438.7 L127.4,436.4 L132.7,439.4 L132.7,455.8 L128.3,456.7 C121.8,453.4 117.8,454.4 111.8,449.4 C107.8,445.4 103.8,445.4 99.8,442.5 Z" fill="#fff" stroke="#2a2a2a" stroke-width="0.85" stroke-linejoin="round" stroke-linecap="round" />
<path d="M99.8,427.3 L105.5,429.7 L110.2,426.9 M105.5,429.7 L105.5,445.9 M122.6,438.7 L127.8,441.7 L132.7,439.4 M127.8,441.7 L128.3,456.7" fill="none" stroke="#2a2a2a" stroke-width="0.6" stroke-linejoin="round" stroke-linecap="round" />
<path d="M105.5,429.7 C106.8,436.4 110.8,442.4 115.8,444.9 C118.8,446.4 121.8,445.4 122.6,441.4" fill="none" stroke="#666" stroke-width="0.5" stroke-linejoin="round" stroke-linecap="round" />
<ellipse cx="105.0" cy="427.1" rx="1.7" ry="1.1" fill="none" stroke="#2a2a2a" stroke-width="0.6"/>
<ellipse cx="127.6" cy="439.1" rx="1.7" ry="1.1" fill="none" stroke="#2a2a2a" stroke-width="0.6"/>
<path d="M133.7,408.3 L138.4,405.4 L144.1,407.9 C144.7,414.4 146.7,419.4 150.7,422.9 C152.7,423.9 154.7,423.9 156.5,419.7 L161.3,417.4 L166.6,420.4 L166.6,436.8 L162.2,437.7 C155.7,434.4 151.7,435.4 145.7,430.4 C141.7,426.4 137.7,426.4 133.7,423.5 Z" fill="#fff" stroke="#2a2a2a" stroke-width="0.85" stroke-linejoin="round" stroke-linecap="round" />
<path d="M133.7,408.3 L139.4,410.7 L144.1,407.9 M139.4,410.7 L139.4,426.9 M156.5,419.7 L161.7,422.7 L166.6,420.4 M161.7,422.7 L162.2,437.7" fill="none" stroke="#2a2a2a" stroke-width="0.6" stroke-linejoin="round" stroke-linecap="round" />
<path d="M139.4,410.7 C140.7,417.4 144.7,423.4 149.7,425.9 C152.7,427.4 155.7,426.4 156.5,422.4" fill="none" stroke="#666" stroke-width="0.5" stroke-linejoin="round" stroke-linecap="round" />
<ellipse cx="138.9" cy="408.1" rx="1.7" ry="1.1" fill="none" stroke="#2a2a2a" stroke-width="0.6"/>
<ellipse cx="161.5" cy="420.1" rx="1.7" ry="1.1" fill="none" stroke="#2a2a2a" stroke-width="0.6"/>
<path d="M71,479 L71,503 M73.5,479 L73.5,503 M71,479 L73.5,479" fill="none" stroke="#2a2a2a" stroke-width="0.6" stroke-linejoin="round" stroke-linecap="round" />
<ellipse cx="72.2" cy="505.0" rx="3.2" ry="2.0" fill="#fff" stroke="#2a2a2a" stroke-width="0.7"/>
<line x1="72.0" y1="468.0" x2="72.0" y2="479.0" stroke="#777" stroke-width="0.5"/>
<line x1="36.4" y1="267.9" x2="74.0" y2="292.0" stroke="#6a6a6a" stroke-width="0.55"/>
<line x1="47.7" y1="261.7" x2="76.0" y2="282.0" stroke="#6a6a6a" stroke-width="0.55"/>
<line x1="80.3" y1="243.3" x2="110.0" y2="262.0" stroke="#6a6a6a" stroke-width="0.55"/>
<line x1="92.8" y1="236.1" x2="112.0" y2="252.0" stroke="#6a6a6a" stroke-width="0.55"/>
<line x1="110.4" y1="224.9" x2="138.0" y2="244.0" stroke="#6a6a6a" stroke-width="0.55"/>
<line x1="128.5" y1="214.9" x2="156.0" y2="232.0" stroke="#6a6a6a" stroke-width="0.55"/>
<line x1="39.3" y1="232.0" x2="98.0" y2="268.0" stroke="#6a6a6a" stroke-width="0.55" stroke-dasharray="6,3"/>
<line x1="126.3" y1="190.0" x2="194.0" y2="228.0" stroke="#6a6a6a" stroke-width="0.55" stroke-dasharray="6,3"/>
<line x1="196.3" y1="195.0" x2="196.3" y2="210.0" stroke="#6a6a6a" stroke-width="0.55"/>
<line x1="221.3" y1="203.0" x2="205.0" y2="211.0" stroke="#6a6a6a" stroke-width="0.55"/>
<line x1="240.3" y1="209.2" x2="226.0" y2="219.0" stroke="#6a6a6a" stroke-width="0.55"/>
<line x1="258.7" y1="220.8" x2="236.0" y2="235.0" stroke="#6a6a6a" stroke-width="0.55"/>
<line x1="300.0" y1="222.0" x2="225.0" y2="262.0" stroke="#6a6a6a" stroke-width="0.55" stroke-dasharray="8,4"/>
<line x1="250.5" y1="260.0" x2="236.0" y2="256.0" stroke="#6a6a6a" stroke-width="0.55"/>
<line x1="270.5" y1="278.8" x2="236.0" y2="262.0" stroke="#6a6a6a" stroke-width="0.55"/>
<line x1="261.0" y1="282.0" x2="238.0" y2="294.0" stroke="#6a6a6a" stroke-width="0.55"/>
<line x1="270.5" y1="296.3" x2="240.0" y2="282.0" stroke="#6a6a6a" stroke-width="0.55"/>
<line x1="272.0" y1="331.4" x2="230.0" y2="300.0" stroke="#6a6a6a" stroke-width="0.55"/>
<line x1="262.3" y1="339.6" x2="243.0" y2="330.0" stroke="#6a6a6a" stroke-width="0.55"/>
<line x1="248.6" y1="360.0" x2="212.0" y2="334.0" stroke="#6a6a6a" stroke-width="0.55"/>
<line x1="230.0" y1="373.8" x2="196.0" y2="352.0" stroke="#6a6a6a" stroke-width="0.55" stroke-dasharray="6,3"/>
<line x1="237.7" y1="386.7" x2="182.0" y2="358.0" stroke="#6a6a6a" stroke-width="0.55" stroke-dasharray="6,3"/>
<line x1="196.0" y1="392.5" x2="170.0" y2="372.0" stroke="#6a6a6a" stroke-width="0.55"/>
<line x1="34.0" y1="351.0" x2="70.0" y2="330.0" stroke="#6a6a6a" stroke-width="0.55"/>
<line x1="40.0" y1="336.0" x2="62.0" y2="325.0" stroke="#6a6a6a" stroke-width="0.55"/>
<line x1="42.0" y1="331.0" x2="60.0" y2="320.0" stroke="#6a6a6a" stroke-width="0.55"/>
<line x1="40.0" y1="385.0" x2="56.0" y2="376.0" stroke="#6a6a6a" stroke-width="0.55"/>
<line x1="33.4" y1="258.0" x2="36.0" y2="264.0" stroke="#555" stroke-width="0.55"/>
<line x1="42.0" y1="253.7" x2="46.0" y2="258.0" stroke="#555" stroke-width="0.55"/>
<line x1="74.0" y1="235.0" x2="79.0" y2="240.0" stroke="#555" stroke-width="0.55"/>
<line x1="88.0" y1="227.0" x2="92.0" y2="234.0" stroke="#555" stroke-width="0.55"/>
<line x1="101.0" y1="219.4" x2="108.0" y2="222.0" stroke="#555" stroke-width="0.55"/>
<line x1="123.0" y1="206.8" x2="127.0" y2="211.0" stroke="#555" stroke-width="0.55"/>
<line x1="203.0" y1="191.0" x2="197.0" y2="193.0" stroke="#555" stroke-width="0.55"/>
<line x1="232.0" y1="197.0" x2="224.0" y2="201.0" stroke="#555" stroke-width="0.55"/>
<line x1="250.8" y1="208.0" x2="245.0" y2="209.0" stroke="#555" stroke-width="0.55"/>
<line x1="270.8" y1="219.5" x2="263.0" y2="220.0" stroke="#555" stroke-width="0.55"/>
<line x1="265.0" y1="257.5" x2="254.0" y2="259.0" stroke="#555" stroke-width="0.55"/>
<line x1="281.5" y1="271.0" x2="274.0" y2="276.0" stroke="#555" stroke-width="0.55"/>
<line x1="281.5" y1="287.5" x2="263.0" y2="283.0" stroke="#555" stroke-width="0.55"/>
<line x1="281.5" y1="303.0" x2="274.0" y2="299.0" stroke="#555" stroke-width="0.55"/>
<line x1="281.5" y1="327.0" x2="276.0" y2="330.0" stroke="#555" stroke-width="0.55"/>
<line x1="258.0" y1="352.0" x2="262.0" y2="343.0" stroke="#555" stroke-width="0.55"/>
<line x1="263.0" y1="350.0" x2="269.0" y2="347.0" stroke="#555" stroke-width="0.55"/>
<line x1="258.2" y1="361.0" x2="251.0" y2="360.0" stroke="#555" stroke-width="0.55"/>
<line x1="244.5" y1="370.0" x2="234.0" y2="373.0" stroke="#555" stroke-width="0.55"/>
<line x1="250.0" y1="385.0" x2="241.0" y2="386.0" stroke="#555" stroke-width="0.55"/>
<line x1="208.0" y1="388.6" x2="199.0" y2="391.0" stroke="#555" stroke-width="0.55"/>
<line x1="152.7" y1="393.0" x2="146.0" y2="388.0" stroke="#555" stroke-width="0.55"/>
<line x1="97.2" y1="481.5" x2="95.0" y2="476.0" stroke="#555" stroke-width="0.55"/>
<line x1="131.4" y1="461.6" x2="129.0" y2="457.0" stroke="#555" stroke-width="0.55"/>
<line x1="165.0" y1="442.6" x2="163.0" y2="438.0" stroke="#555" stroke-width="0.55"/>
<line x1="80.4" y1="494.0" x2="74.0" y2="490.0" stroke="#555" stroke-width="0.55"/>
<line x1="36.0" y1="391.8" x2="40.0" y2="386.0" stroke="#555" stroke-width="0.55"/>
<line x1="25.0" y1="368.4" x2="27.0" y2="364.0" stroke="#555" stroke-width="0.55"/>
<line x1="27.0" y1="333.5" x2="31.0" y2="336.0" stroke="#555" stroke-width="0.55"/>
<line x1="37.0" y1="326.9" x2="41.0" y2="330.0" stroke="#555" stroke-width="0.55"/>
<line x1="128.0" y1="180.0" x2="124.0" y2="186.0" stroke="#555" stroke-width="0.55"/>
<line x1="45.0" y1="222.0" x2="40.0" y2="229.0" stroke="#555" stroke-width="0.55"/>
<line x1="50.0" y1="226.0" x2="42.0" y2="232.0" stroke="#555" stroke-width="0.55"/>
<line x1="237.0" y1="181.0" x2="231.0" y2="186.0" stroke="#555" stroke-width="0.55"/>
<line x1="299.0" y1="182.0" x2="305.0" y2="192.0" stroke="#555" stroke-width="0.55"/>
<line x1="337.0" y1="189.0" x2="340.0" y2="193.0" stroke="#555" stroke-width="0.55"/>
<ellipse cx="36.4" cy="267.9" rx="3.5" ry="4.2" fill="#fff" stroke="#2a2a2a" stroke-width="0.9" transform="rotate(-30 36.4 267.9)"/>
<ellipse cx="37.3" cy="268.2" rx="2.3" ry="2.9" fill="none" stroke="#2a2a2a" stroke-width="0.6" transform="rotate(-30 37.3 268.2)"/>
<ellipse cx="47.7" cy="261.7" rx="3.5" ry="4.2" fill="#fff" stroke="#2a2a2a" stroke-width="0.9" transform="rotate(-30 47.7 261.7)"/>
<ellipse cx="48.6" cy="262.0" rx="2.3" ry="2.9" fill="none" stroke="#2a2a2a" stroke-width="0.6" transform="rotate(-30 48.6 262.0)"/>
<ellipse cx="80.3" cy="243.3" rx="3.5" ry="4.2" fill="#fff" stroke="#2a2a2a" stroke-width="0.9" transform="rotate(-30 80.3 243.3)"/>
<ellipse cx="81.2" cy="243.6" rx="2.3" ry="2.9" fill="none" stroke="#2a2a2a" stroke-width="0.6" transform="rotate(-30 81.2 243.6)"/>
<ellipse cx="110.4" cy="224.9" rx="3.5" ry="4.2" fill="#fff" stroke="#2a2a2a" stroke-width="0.9" transform="rotate(-30 110.4 224.9)"/>
<ellipse cx="111.3" cy="225.2" rx="2.3" ry="2.9" fill="none" stroke="#2a2a2a" stroke-width="0.6" transform="rotate(-30 111.3 225.2)"/>
<ellipse cx="128.5" cy="214.9" rx="3.5" ry="4.2" fill="#fff" stroke="#2a2a2a" stroke-width="0.9" transform="rotate(-30 128.5 214.9)"/>
<ellipse cx="129.4" cy="215.2" rx="2.3" ry="2.9" fill="none" stroke="#2a2a2a" stroke-width="0.6" transform="rotate(-30 129.4 215.2)"/>
<ellipse cx="92.8" cy="236.1" rx="1.6" ry="1.6" fill="#fff" stroke="#2a2a2a" stroke-width="0.8"/>
<ellipse cx="119.6" cy="185.9" rx="3.0" ry="3.0" fill="#fff" stroke="#2a2a2a" stroke-width="0.9"/>
<ellipse cx="120.6" cy="186.9" rx="2.4" ry="2.4" fill="#fff" stroke="#2a2a2a" stroke-width="0.8"/>
<ellipse cx="126.3" cy="190.0" rx="1.6" ry="2.2" fill="#fff" stroke="#2a2a2a" stroke-width="0.7" transform="rotate(-30 126.3 190.0)"/>
<ellipse cx="32.6" cy="226.9" rx="3.0" ry="3.0" fill="#fff" stroke="#2a2a2a" stroke-width="0.9"/>
<ellipse cx="33.6" cy="227.9" rx="2.4" ry="2.4" fill="#fff" stroke="#2a2a2a" stroke-width="0.8"/>
<ellipse cx="39.3" cy="232.0" rx="1.6" ry="2.2" fill="#fff" stroke="#2a2a2a" stroke-width="0.7" transform="rotate(-30 39.3 232.0)"/>
<rect x="194.8" y="190.5" width="3" height="6" rx="1.4" fill="#fff" stroke="#333" stroke-width="0.7"/>
<ellipse cx="221.3" cy="203.0" rx="1.8" ry="1.5" fill="#fff" stroke="#2a2a2a" stroke-width="0.8"/>
<ellipse cx="240.3" cy="209.2" rx="5.0" ry="6.3" fill="#fff" stroke="#2a2a2a" stroke-width="0.9" transform="rotate(-25 240.3 209.2)"/>
<ellipse cx="258.7" cy="220.8" rx="3.8" ry="4.5" fill="#fff" stroke="#2a2a2a" stroke-width="0.9" transform="rotate(-30 258.7 220.8)"/>
<ellipse cx="259.6" cy="221.1" rx="2.5" ry="3.1" fill="none" stroke="#2a2a2a" stroke-width="0.6" transform="rotate(-30 259.6 221.1)"/>
<ellipse cx="250.5" cy="260.0" rx="2.8" ry="2.9" fill="#fff" stroke="#2a2a2a" stroke-width="0.9" transform="rotate(-30 250.5 260.0)"/>
<ellipse cx="249.7" cy="259.6" rx="2.0" ry="2.1" fill="none" stroke="#2a2a2a" stroke-width="0.6" transform="rotate(-30 249.7 259.6)"/>
<ellipse cx="270.5" cy="278.8" rx="3.6" ry="4.3" fill="#fff" stroke="#2a2a2a" stroke-width="0.9" transform="rotate(-30 270.5 278.8)"/>
<ellipse cx="271.4" cy="279.1" rx="2.3" ry="3.0" fill="none" stroke="#2a2a2a" stroke-width="0.6" transform="rotate(-30 271.4 279.1)"/>
<ellipse cx="261.0" cy="282.0" rx="1.2" ry="1.2" fill="#fff" stroke="#2a2a2a" stroke-width="0.7"/>
<ellipse cx="270.5" cy="296.3" rx="3.6" ry="4.3" fill="#fff" stroke="#2a2a2a" stroke-width="0.9" transform="rotate(-30 270.5 296.3)"/>
<ellipse cx="271.4" cy="296.6" rx="2.3" ry="3.0" fill="none" stroke="#2a2a2a" stroke-width="0.6" transform="rotate(-30 271.4 296.6)"/>
<ellipse cx="272.0" cy="331.4" rx="3.9" ry="4.6" fill="#fff" stroke="#2a2a2a" stroke-width="0.9" transform="rotate(-30 272.0 331.4)"/>
<ellipse cx="272.9" cy="331.7" rx="2.5" ry="3.2" fill="none" stroke="#2a2a2a" stroke-width="0.6" transform="rotate(-30 272.9 331.7)"/>
<ellipse cx="262.3" cy="339.6" rx="1.6" ry="1.8" fill="#fff" stroke="#2a2a2a" stroke-width="0.7"/>
<ellipse cx="270.5" cy="343.7" rx="3.0" ry="3.2" fill="#fff" stroke="#2a2a2a" stroke-width="0.9" transform="rotate(-30 270.5 343.7)"/>
<ellipse cx="269.7" cy="343.3" rx="2.1" ry="2.2" fill="none" stroke="#2a2a2a" stroke-width="0.6" transform="rotate(-30 269.7 343.3)"/>
<ellipse cx="248.6" cy="360.0" rx="1.5" ry="1.5" fill="#fff" stroke="#2a2a2a" stroke-width="0.7"/>
<ellipse cx="230.0" cy="373.8" rx="3.9" ry="4.6" fill="#fff" stroke="#2a2a2a" stroke-width="0.9" transform="rotate(-30 230.0 373.8)"/>
<ellipse cx="230.9" cy="374.1" rx="2.5" ry="3.2" fill="none" stroke="#2a2a2a" stroke-width="0.6" transform="rotate(-30 230.9 374.1)"/>
<ellipse cx="237.7" cy="386.7" rx="3.9" ry="4.6" fill="#fff" stroke="#2a2a2a" stroke-width="0.9" transform="rotate(-30 237.7 386.7)"/>
<ellipse cx="238.6" cy="387.0" rx="2.5" ry="3.2" fill="none" stroke="#2a2a2a" stroke-width="0.6" transform="rotate(-30 238.6 387.0)"/>
<ellipse cx="196.0" cy="392.5" rx="3.2" ry="3.4" fill="#fff" stroke="#2a2a2a" stroke-width="0.9" transform="rotate(-30 196.0 392.5)"/>
<ellipse cx="195.2" cy="392.1" rx="2.2" ry="2.4" fill="none" stroke="#2a2a2a" stroke-width="0.6" transform="rotate(-30 195.2 392.1)"/>
<path d="M23.5,350 L31,345.5 M27,363 L35,358.5" fill="none" stroke="#2a2a2a" stroke-width="0.8" stroke-linejoin="round" stroke-linecap="round" />
<ellipse cx="25.0" cy="356.5" rx="3.5" ry="6.6" fill="#fff" stroke="#2a2a2a" stroke-width="0.9" transform="rotate(-25 25.0 356.5)"/>
<ellipse cx="33.5" cy="352.0" rx="3.5" ry="6.6" fill="none" stroke="#2a2a2a" stroke-width="0.8" transform="rotate(-25 33.5 352.0)"/>
<ellipse cx="25.5" cy="356.5" rx="2.3" ry="5.0" fill="none" stroke="#2a2a2a" stroke-width="0.6" transform="rotate(-25 25.5 356.5)"/>
<ellipse cx="35.5" cy="339.0" rx="4.0" ry="5.0" fill="#fff" stroke="#2a2a2a" stroke-width="0.9" transform="rotate(-30 35.5 339.0)"/>
<ellipse cx="36.4" cy="339.3" rx="2.6" ry="3.5" fill="none" stroke="#2a2a2a" stroke-width="0.6" transform="rotate(-30 36.4 339.3)"/>
<ellipse cx="42.0" cy="331.0" rx="1.4" ry="1.4" fill="#fff" stroke="#2a2a2a" stroke-width="0.7"/>
<ellipse cx="39.8" cy="385.0" rx="1.3" ry="1.3" fill="#fff" stroke="#2a2a2a" stroke-width="0.7"/>
<path d="M299.4,219.1 C299,210 300,200 304.2,191.7 C306,189 309,188.5 311,189 C314,189 318,189.5 320.6,190.3 C325,192 328,195 330.2,197.2 C334,202 336,206 337,208.8 C339,213 340.5,216 340.5,219.8 L341.2,236.2 C341.2,240 340.8,243 339.8,243.8 C338.5,244.5 337,244.5 335.7,243.8 L301.4,222.5 C300,221.5 299.5,220.5 299.4,219.1Z" fill="#fff" stroke="#2a2a2a" stroke-width="1.0" stroke-linejoin="round" stroke-linecap="round" />
<path d="M302.5,218 C302,208 304,198 309,193.5 C316,192 324,194 330,200 C336,207 338.5,214 338.5,222 L339,240 L303.5,220.5Z" fill="none" stroke="#2a2a2a" stroke-width="0.6" stroke-linejoin="round" stroke-linecap="round" />
<ellipse cx="320.5" cy="214.5" rx="11.5" ry="15.5" fill="none" stroke="#2a2a2a" stroke-width="0.9" transform="rotate(-22 320.5 214.5)"/>
<ellipse cx="320.5" cy="214.5" rx="9.5" ry="13.0" fill="none" stroke="#2a2a2a" stroke-width="0.6" transform="rotate(-22 320.5 214.5)"/>
<ellipse cx="320.5" cy="214.8" rx="4.3" ry="6.2" fill="none" stroke="#2a2a2a" stroke-width="0.7" transform="rotate(-22 320.5 214.8)"/>
<path d="M333,200 C337,210 339,226 338,238 M336,204 L340,232" fill="none" stroke="#2a2a2a" stroke-width="0.6" stroke-linejoin="round" stroke-linecap="round" />
<ellipse cx="301.5" cy="207.0" rx="0.9" ry="0.9" fill="none" stroke="#2a2a2a" stroke-width="0.6"/>
<ellipse cx="315.0" cy="192.0" rx="0.9" ry="0.9" fill="none" stroke="#2a2a2a" stroke-width="0.6"/>
<ellipse cx="323.0" cy="194.0" rx="0.9" ry="0.9" fill="none" stroke="#2a2a2a" stroke-width="0.6"/>
<ellipse cx="329.0" cy="198.0" rx="0.9" ry="0.9" fill="none" stroke="#2a2a2a" stroke-width="0.6"/>
<ellipse cx="338.0" cy="214.0" rx="0.9" ry="0.9" fill="none" stroke="#2a2a2a" stroke-width="0.6"/>
<ellipse cx="339.0" cy="228.0" rx="0.9" ry="0.9" fill="none" stroke="#2a2a2a" stroke-width="0.6"/>
<ellipse cx="339.0" cy="240.0" rx="0.9" ry="0.9" fill="none" stroke="#2a2a2a" stroke-width="0.6"/>
<ellipse cx="318.0" cy="232.0" rx="0.9" ry="0.9" fill="none" stroke="#2a2a2a" stroke-width="0.6"/>
<ellipse cx="304.0" cy="220.0" rx="0.9" ry="0.9" fill="none" stroke="#2a2a2a" stroke-width="0.6"/>
<path d="M333.5,199.5 L343,193.5" fill="none" stroke="#555" stroke-width="0.6" stroke-linejoin="round" stroke-linecap="round" />
<ellipse cx="343.5" cy="193.3" rx="1.8" ry="1.4" fill="#fff" stroke="#2a2a2a" stroke-width="0.8" transform="rotate(-30 343.5 193.3)"/>
<path d="M340,195 L345,192" fill="none" stroke="#2a2a2a" stroke-width="1.2" stroke-linejoin="round" stroke-linecap="round" />
<rect x="24" y="255" width="9" height="7" fill="#ffff00"/>
<text x="28.5" y="261.2" text-anchor="middle" font-family="Liberation Sans" font-size="8" fill="#000" stroke="#000" stroke-width="0.15" letter-spacing="-0.3">11</text>
<rect x="38" y="247" width="9" height="7" fill="#ffff00"/>
<text x="42.5" y="253.2" text-anchor="middle" font-family="Liberation Sans" font-size="8" fill="#000" stroke="#000" stroke-width="0.15" letter-spacing="-0.3">12</text>
<rect x="70" y="228" width="9" height="7" fill="#ffff00"/>
<text x="74.5" y="234.2" text-anchor="middle" font-family="Liberation Sans" font-size="8" fill="#000" stroke="#000" stroke-width="0.15" letter-spacing="-0.3">13</text>
<rect x="84" y="220" width="9" height="7" fill="#ffff00"/>
<text x="88.5" y="226.2" text-anchor="middle" font-family="Liberation Sans" font-size="8" fill="#000" stroke="#000" stroke-width="0.15" letter-spacing="-0.3">14</text>
<rect x="97" y="213" width="9" height="7" fill="#ffff00"/>
<text x="101.5" y="219.2" text-anchor="middle" font-family="Liberation Sans" font-size="8" fill="#000" stroke="#000" stroke-width="0.15" letter-spacing="-0.3">15</text>
<rect x="119" y="199" width="9" height="8" fill="#ffff00"/>
<text x="123.5" y="206.2" text-anchor="middle" font-family="Liberation Sans" font-size="8" fill="#000" stroke="#000" stroke-width="0.15" letter-spacing="-0.3">16</text>
<rect x="203" y="188" width="9" height="8" fill="#ffff00"/>
<text x="207.5" y="195.2" text-anchor="middle" font-family="Liberation Sans" font-size="8" fill="#000" stroke="#000" stroke-width="0.15" letter-spacing="-0.3">17</text>
<rect x="232" y="193" width="9" height="8" fill="#ffff00"/>
<text x="236.5" y="200.2" text-anchor="middle" font-family="Liberation Sans" font-size="8" fill="#000" stroke="#000" stroke-width="0.15" letter-spacing="-0.3">18</text>
<rect x="251" y="204" width="9" height="8" fill="#ffff00"/>
<text x="255.5" y="211.2" text-anchor="middle" font-family="Liberation Sans" font-size="8" fill="#000" stroke="#000" stroke-width="0.15" letter-spacing="-0.3">19</text>
<rect x="271" y="216" width="10" height="7" fill="#ffff00"/>
<text x="276.0" y="222.2" text-anchor="middle" font-family="Liberation Sans" font-size="8" fill="#000" stroke="#000" stroke-width="0.15" letter-spacing="-0.3">20</text>
<rect x="265" y="255" width="8" height="6" fill="#ffff00"/>
<text x="269.0" y="260.2" text-anchor="middle" font-family="Liberation Sans" font-size="8" fill="#000" stroke="#000" stroke-width="0.15" letter-spacing="-0.3">21</text>
<rect x="281" y="268" width="9" height="7" fill="#ffff00"/>
<text x="285.5" y="274.2" text-anchor="middle" font-family="Liberation Sans" font-size="8" fill="#000" stroke="#000" stroke-width="0.15" letter-spacing="-0.3">23</text>
<rect x="281" y="285" width="9" height="6" fill="#ffff00"/>
<text x="285.5" y="290.2" text-anchor="middle" font-family="Liberation Sans" font-size="8" fill="#000" stroke="#000" stroke-width="0.15" letter-spacing="-0.3">22</text>
<rect x="281" y="300" width="9" height="6" fill="#ffff00"/>
<text x="285.5" y="305.2" text-anchor="middle" font-family="Liberation Sans" font-size="8" fill="#000" stroke="#000" stroke-width="0.15" letter-spacing="-0.3">24</text>
<rect x="281" y="324" width="9" height="7" fill="#ffff00"/>
<text x="285.5" y="330.2" text-anchor="middle" font-family="Liberation Sans" font-size="8" fill="#000" stroke="#000" stroke-width="0.15" letter-spacing="-0.3">25</text>
<rect x="251" y="346" width="8" height="7" fill="#ffff00"/>
<text x="255.0" y="352.2" text-anchor="middle" font-family="Liberation Sans" font-size="8" fill="#000" stroke="#000" stroke-width="0.15" letter-spacing="-0.3">27</text>
<rect x="259" y="351" width="8" height="6" fill="#ffff00"/>
<text x="263.0" y="356.2" text-anchor="middle" font-family="Liberation Sans" font-size="8" fill="#000" stroke="#000" stroke-width="0.15" letter-spacing="-0.3">26</text>
<rect x="258" y="358" width="9" height="7" fill="#ffff00"/>
<text x="262.5" y="364.2" text-anchor="middle" font-family="Liberation Sans" font-size="8" fill="#000" stroke="#000" stroke-width="0.15" letter-spacing="-0.3">28</text>
<rect x="244" y="367" width="9" height="7" fill="#ffff00"/>
<text x="248.5" y="373.2" text-anchor="middle" font-family="Liberation Sans" font-size="8" fill="#000" stroke="#000" stroke-width="0.15" letter-spacing="-0.3">29</text>
<rect x="250" y="382" width="9" height="7" fill="#ffff00"/>
<text x="254.5" y="388.2" text-anchor="middle" font-family="Liberation Sans" font-size="8" fill="#000" stroke="#000" stroke-width="0.15" letter-spacing="-0.3">30</text>
<rect x="208" y="385" width="8" height="7" fill="#ffff00"/>
<text x="212.0" y="391.2" text-anchor="middle" font-family="Liberation Sans" font-size="8" fill="#000" stroke="#000" stroke-width="0.15" letter-spacing="-0.3">31</text>
<rect x="153" y="393" width="5" height="6" fill="#ffff00"/>
<text x="155.5" y="398.2" text-anchor="middle" font-family="Liberation Sans" font-size="8" fill="#000" stroke="#000" stroke-width="0.15" letter-spacing="-0.3">2</text>
<rect x="97" y="481" width="7" height="8" fill="#ffff00"/>
<text x="100.5" y="488.2" text-anchor="middle" font-family="Liberation Sans" font-size="8" fill="#000" stroke="#000" stroke-width="0.15" letter-spacing="-0.3">3</text>
<rect x="131" y="462" width="7" height="7" fill="#ffff00"/>
<text x="134.5" y="468.2" text-anchor="middle" font-family="Liberation Sans" font-size="8" fill="#000" stroke="#000" stroke-width="0.15" letter-spacing="-0.3">4</text>
<rect x="165" y="443" width="7" height="7" fill="#ffff00"/>
<text x="168.5" y="449.2" text-anchor="middle" font-family="Liberation Sans" font-size="8" fill="#000" stroke="#000" stroke-width="0.15" letter-spacing="-0.3">5</text>
<rect x="80" y="491" width="7" height="7" fill="#ffff00"/>
<text x="83.5" y="497.2" text-anchor="middle" font-family="Liberation Sans" font-size="8" fill="#000" stroke="#000" stroke-width="0.15" letter-spacing="-0.3">6</text>
<rect x="34" y="392" width="6" height="7" fill="#ffff00"/>
<text x="37.0" y="398.2" text-anchor="middle" font-family="Liberation Sans" font-size="8" fill="#000" stroke="#000" stroke-width="0.15" letter-spacing="-0.3">7</text>
<rect x="32" y="319" width="7" height="8" fill="#ffff00"/>
<text x="35.5" y="326.2" text-anchor="middle" font-family="Liberation Sans" font-size="8" fill="#000" stroke="#000" stroke-width="0.15" letter-spacing="-0.3">9</text>
<rect x="17" y="330" width="10" height="7" fill="#ffff00"/>
<text x="22.0" y="336.2" text-anchor="middle" font-family="Liberation Sans" font-size="8" fill="#000" stroke="#000" stroke-width="0.15" letter-spacing="-0.3">10</text>
<rect x="21" y="368" width="6" height="7" fill="#f07070"/>
<text x="24.0" y="374.2" text-anchor="middle" font-family="Liberation Sans" font-size="7" fill="#000" stroke="#000" stroke-width="0.15" letter-spacing="-0.3">8</text>
<text x="125.0" y="181.0" font-family="Liberation Sans" font-size="7.5" fill="#333">32</text>
<text x="39.0" y="222.0" font-family="Liberation Sans" font-size="7.5" fill="#333">33</text>
<text x="47.0" y="226.0" font-family="Liberation Sans" font-size="7.5" fill="#333">34</text>
<text x="235.0" y="183.0" font-family="Liberation Sans" font-size="7.5" fill="#333">1</text>
<text x="295.0" y="182.0" font-family="Liberation Sans" font-size="7.5" fill="#333">35</text>
<text x="333.0" y="189.0" font-family="Liberation Sans" font-size="7.5" fill="#333">36</text></g>
<g id="toolbar">
<rect x="1.5" y="21.5" width="43" height="169" fill="#fff" stroke="#a9a9a9" stroke-width="1"/>
<rect x="5" y="25" width="36" height="162" fill="#ababab"/>
<defs>
<linearGradient id="btn" x1="0" y1="0" x2="0" y2="1"><stop offset="0" stop-color="#f4f4f4"/><stop offset="0.5" stop-color="#e6e6e6"/><stop offset="1" stop-color="#d2d2d2"/></linearGradient>
</defs>
<!-- plus -->
<path d="M16.5,34.5 H30 L30,38.5 L32.5,41 L30,43.5 V48.5 H16.5 Z" fill="url(#btn)" stroke="#8f8f8f" stroke-width="1"/>
<rect x="18" y="40" width="10" height="2" fill="#555"/><rect x="22" y="36" width="2" height="10" fill="#555"/>
<!-- minus -->
<path d="M16.5,57.5 H30 V71.5 H16.5 V66 L14,63.5 L16.5,61 Z" fill="url(#btn)" stroke="#8f8f8f" stroke-width="1"/>
<rect x="18" y="63" width="10" height="2" fill="#555"/>
<!-- grid -->
<rect x="16.5" y="86.5" width="13.5" height="13.5" fill="url(#btn)" stroke="#8f8f8f" stroke-width="1"/>
<rect x="18" y="88" width="3.2" height="3.2" fill="#707070"/><rect x="25.3" y="88" width="3.2" height="3.2" fill="#707070"/>
<rect x="18" y="95.3" width="3.2" height="3.2" fill="#707070"/><rect x="25.3" y="95.3" width="3.2" height="3.2" fill="#707070"/>
<!-- fit -->
<rect x="16.5" y="109.5" width="13.5" height="13.5" fill="url(#btn)" stroke="#8f8f8f" stroke-width="1"/>
<rect x="19.5" y="112.5" width="7.5" height="7.5" fill="#ddd" stroke="#555" stroke-width="1"/>
<!-- list arrow -->
<rect x="14.5" y="161.5" width="4.5" height="4.5" fill="#eee" stroke="#888" stroke-width="0.8"/>
<rect x="14.5" y="166.5" width="4.5" height="4.5" fill="#e4e4e4" stroke="#888" stroke-width="0.8"/>
<rect x="14.5" y="171.5" width="4.5" height="4.5" fill="#ddd" stroke="#888" stroke-width="0.8"/>
<path d="M19.8,161.5 V176" stroke="#777" stroke-width="1"/>
<defs><linearGradient id="fade" x1="0" y1="0" x2="1" y2="0"><stop offset="0" stop-color="#f2f2f2"/><stop offset="1" stop-color="#ababab"/></linearGradient></defs>
<rect x="20.5" y="161" width="10" height="15" fill="url(#fade)"/>
<path d="M22,169 H28" stroke="#444" stroke-width="2"/><path d="M27,166 L31,169 L27,172 Z" fill="#444"/>
</g>
<g id="perkins">
<rect x="977" y="601" width="43" height="56" fill="#fff"/>
<g fill="none" stroke="#0c57a0" stroke-width="2.7">
<circle cx="988.6" cy="617" r="6.5"/>
<circle cx="1004.6" cy="617" r="6.5"/>
<circle cx="988.6" cy="633.6" r="6.5"/>
<circle cx="1004.6" cy="633.6" r="6.5"/>
<path d="M984.3,621.3 L992.9,612.7 M1000.3,612.7 L1008.9,621.3 M984.3,629.3 L992.9,637.9 M1000.3,637.9 L1008.9,629.3"/>
</g>
<path d="M996.6,607.6 L999,612 L994.2,612 Z M996.6,643 L999,638.6 L994.2,638.6Z M980,625.3 L984,623 L984,627.6Z M1013.2,625.3 L1009.2,623 L1009.2,627.6Z" fill="#0c57a0"/>
<text x="978.8" y="654.5" font-family="Liberation Sans" font-weight="bold" font-size="11" fill="#0c57a0" letter-spacing="-0.45">Perkins</text>
<circle cx="1016.5" cy="647.5" r="0.6" fill="#0c57a0"/>
</g>
<g id="hdricon">
<rect x="385.5" y="23.5" width="12.5" height="13" fill="#1f6fc0" stroke="#3a8ad8" stroke-width="1"/>
<rect x="386" y="24" width="12" height="2" fill="#d8ecff"/>
<rect x="386" y="27" width="3" height="9" fill="#ffffff"/>
<path d="M387,28 h1.5 M387,30 h1.5 M387,32 h1.5 M387,34 h1.5" stroke="#1f6fc0" stroke-width="0.8"/>
<path d="M396,34.5 L400.5,39" stroke="#4a8ed0" stroke-width="2.2"/>
<circle cx="393.2" cy="31.3" r="4.6" fill="#1f6fc0"/>
<circle cx="393.2" cy="31.3" r="3.6" fill="#d8d8d8"/>
<circle cx="392.4" cy="30.3" r="1.8" fill="#f4f4f4"/>
</g>

</svg>
<div class="h" style="left:443px">Symbol(s)</div><div class="h" style="left:504px">Item</div><div class="h" style="left:539px">Parts No.</div><div class="h" style="left:600px">Qty.</div><div class="h" style="left:635px">Latest Part No.</div><div class="h" style="left:719px">Description</div><div class="h" style="left:863px">Cut Out</div><div class="h" style="left:920px">Cut In</div><div class="h" style="left:963px">Comment</div>
<div class="c n" style="left:501px;top:40px">2</div><div class="c n" style="left:597px;top:40px">1</div><div class="c d" style="left:716px;top:40px">CYLINDER BLOCK</div><div class="c n" style="left:501px;top:60px">3</div><div class="c n" style="left:597px;top:60px">1</div><div class="c d" style="left:716px;top:60px">BEARING CAP</div><div class="c n" style="left:501px;top:80px">4</div><div class="c n" style="left:597px;top:80px">5</div><div class="c d" style="left:716px;top:80px">BEARING CAP</div><div class="c n" style="left:501px;top:100px">5</div><div class="c n" style="left:597px;top:100px">1</div><div class="c d" style="left:716px;top:100px">BEARING CAP</div><div class="c n" style="left:501px;top:120px">6</div><div class="c n" style="left:536px;top:120px">3218A511</div><div class="c n" style="left:597px;top:120px">14</div><div class="c n" style="left:632px;top:120px">3218A511</div><div class="c d" style="left:716px;top:120px">SCREW</div><div class="c n" style="left:501px;top:140px">7</div><div class="c n" style="left:536px;top:140px">0350010</div><div class="c n" style="left:597px;top:140px">1</div><div class="c n" style="left:632px;top:140px">0350010</div><div class="c d" style="left:716px;top:140px">DOWEL</div><div class="c n s" style="left:501px;top:160px">8</div><div class="c n s" style="left:536px;top:160px">T410164</div><div class="c n s" style="left:597px;top:160px">1</div><div class="c n s" style="left:632px;top:160px">T410164</div><div class="c d s" style="left:716px;top:160px">CAMSHAFT BUSH</div><div class="c n" style="left:501px;top:180px">8</div><div class="c n" style="left:536px;top:180px">3112D091</div><div class="c n" style="left:597px;top:180px">1</div><div class="c n" style="left:632px;top:180px">T410164</div><div class="c d" style="left:716px;top:180px">CAMSHAFT BUSH</div><div class="c n" style="left:501px;top:200px">9</div><div class="c n" style="left:536px;top:200px">2485A309</div><div class="c n" style="left:597px;top:200px">1</div><div class="c n" style="left:632px;top:200px">2485A309</div><div class="c d" style="left:716px;top:200px">PLUG</div><div class="c n" style="left:501px;top:220px">10</div><div class="c n" style="left:536px;top:220px">2485A526</div><div class="c n" style="left:597px;top:220px">1</div><div class="c n" style="left:632px;top:220px">2485A526</div><div class="c d" style="left:716px;top:220px">PLUG</div><div class="c n" style="left:501px;top:240px">11</div><div class="c n" style="left:536px;top:240px">0650710</div><div class="c n" style="left:597px;top:240px">1</div><div class="c n" style="left:632px;top:240px">0650710</div><div class="c d" style="left:716px;top:240px">PLUG</div><div class="c n" style="left:501px;top:260px">12</div><div class="c n" style="left:536px;top:260px">3241A011</div><div class="c n" style="left:597px;top:260px">1</div><div class="c n" style="left:632px;top:260px">3241A011</div><div class="c d" style="left:716px;top:260px">PLUG</div><div class="c n" style="left:501px;top:280px">13</div><div class="c n" style="left:536px;top:280px">0650710</div><div class="c n" style="left:597px;top:280px">1</div><div class="c n" style="left:632px;top:280px">0650710</div><div class="c d" style="left:716px;top:280px">PLUG</div><div class="c n" style="left:501px;top:300px">14</div><div class="c n" style="left:536px;top:300px">2485A309</div><div class="c n" style="left:597px;top:300px">1</div><div class="c n" style="left:632px;top:300px">2485A309</div><div class="c d" style="left:716px;top:300px">PLUG</div><div class="c n" style="left:501px;top:320px">15</div><div class="c n" style="left:536px;top:320px">3241A011</div><div class="c n" style="left:597px;top:320px">1</div><div class="c n" style="left:632px;top:320px">3241A011</div><div class="c d" style="left:716px;top:320px">PLUG</div><div class="c n" style="left:501px;top:340px">16</div><div class="c n" style="left:536px;top:340px">0650710</div><div class="c n" style="left:597px;top:340px">1</div><div class="c n" style="left:632px;top:340px">0650710</div><div class="c d" style="left:716px;top:340px">PLUG</div><div class="c n" style="left:501px;top:360px">17</div><div class="c n" style="left:536px;top:360px">3244A009</div><div class="c n" style="left:597px;top:360px">2</div><div class="c n" style="left:632px;top:360px">3244A009</div><div class="c d" style="left:716px;top:360px">DOWEL</div><div class="c n" style="left:501px;top:380px">18</div><div class="c n" style="left:536px;top:380px">2485A309</div><div class="c n" style="left:597px;top:380px">1</div><div class="c n" style="left:632px;top:380px">2485A309</div><div class="c d" style="left:716px;top:380px">PLUG</div><div class="c n" style="left:501px;top:400px">19</div><div class="c n" style="left:536px;top:400px">2485A526</div><div class="c n" style="left:597px;top:400px">1</div><div class="c n" style="left:632px;top:400px">2485A526</div><div class="c d" style="left:716px;top:400px">PLUG</div><div class="c n" style="left:501px;top:420px">20</div><div class="c n" style="left:536px;top:420px">3241A012</div><div class="c n" style="left:597px;top:420px">1</div><div class="c n" style="left:632px;top:420px">3241A012</div><div class="c d" style="left:716px;top:420px">PLUG</div><div class="c n" style="left:501px;top:440px">21</div><div class="c n" style="left:536px;top:440px">3212P008</div><div class="c n" style="left:597px;top:440px">1</div><div class="c n" style="left:632px;top:440px">3212P008</div><div class="c d" style="left:716px;top:440px">PLUG</div><div class="c n" style="left:501px;top:460px">22</div><div class="c n" style="left:536px;top:460px">0350010</div><div class="c n" style="left:597px;top:460px">1</div><div class="c n" style="left:632px;top:460px">0350010</div><div class="c d" style="left:716px;top:460px">DOWEL</div><div class="c n" style="left:501px;top:480px">23</div><div class="c n" style="left:536px;top:480px">0650710</div><div class="c n" style="left:597px;top:480px">1</div><div class="c n" style="left:632px;top:480px">0650710</div><div class="c d" style="left:716px;top:480px">PLUG</div><div class="c n" style="left:501px;top:500px">24</div><div class="c n" style="left:536px;top:500px">2485A526</div><div class="c n" style="left:597px;top:500px">1</div><div class="c n" style="left:632px;top:500px">2485A526</div><div class="c d" style="left:716px;top:500px">PLUG</div><div class="c n" style="left:501px;top:520px">25</div><div class="c n" style="left:536px;top:520px">2485A526</div><div class="c n" style="left:597px;top:520px">1</div><div class="c n" style="left:632px;top:520px">2485A526</div><div class="c d" style="left:716px;top:520px">PLUG</div><div class="c n" style="left:501px;top:540px">26</div><div class="c n" style="left:536px;top:540px">3278A006</div><div class="c n" style="left:597px;top:540px">1</div><div class="c n" style="left:632px;top:540px">3278A006</div><div class="c d" style="left:716px;top:540px">PLUG</div><div class="c n" style="left:501px;top:560px">27</div><div class="c n" style="left:536px;top:560px">2415H003</div><div class="c n" style="left:597px;top:560px">1</div><div class="c n" style="left:632px;top:560px">2415H003</div><div class="c d" style="left:716px;top:560px">SEAL - O RING</div><div class="c n" style="left:501px;top:580px">28</div><div class="c n" style="left:536px;top:580px">2485A309</div><div class="c n" style="left:597px;top:580px">1</div><div class="c n" style="left:632px;top:580px">2485A309</div><div class="c d" style="left:716px;top:580px">PLUG</div><div class="c n" style="left:501px;top:600px">29</div><div class="c n" style="left:536px;top:600px">2485A526</div><div class="c n" style="left:597px;top:600px">1</div><div class="c n" style="left:632px;top:600px">2485A526</div><div class="c d" style="left:716px;top:600px">PLUG</div><div class="c n" style="left:501px;top:620px">30</div><div class="c n" style="left:536px;top:620px">2485A526</div><div class="c n" style="left:597px;top:620px">1</div><div class="c n" style="left:632px;top:620px">2485A526</div><div class="c d" style="left:716px;top:620px">PLUG</div><div class="c n" style="left:501px;top:640px">31</div><div class="c n" style="left:536px;top:640px">0650710</div><div class="c n" style="left:597px;top:640px">1</div><div class="c n" style="left:632px;top:640px">0650710</div><div class="c d" style="left:716px;top:640px">PLUG</div>
</body></html>
